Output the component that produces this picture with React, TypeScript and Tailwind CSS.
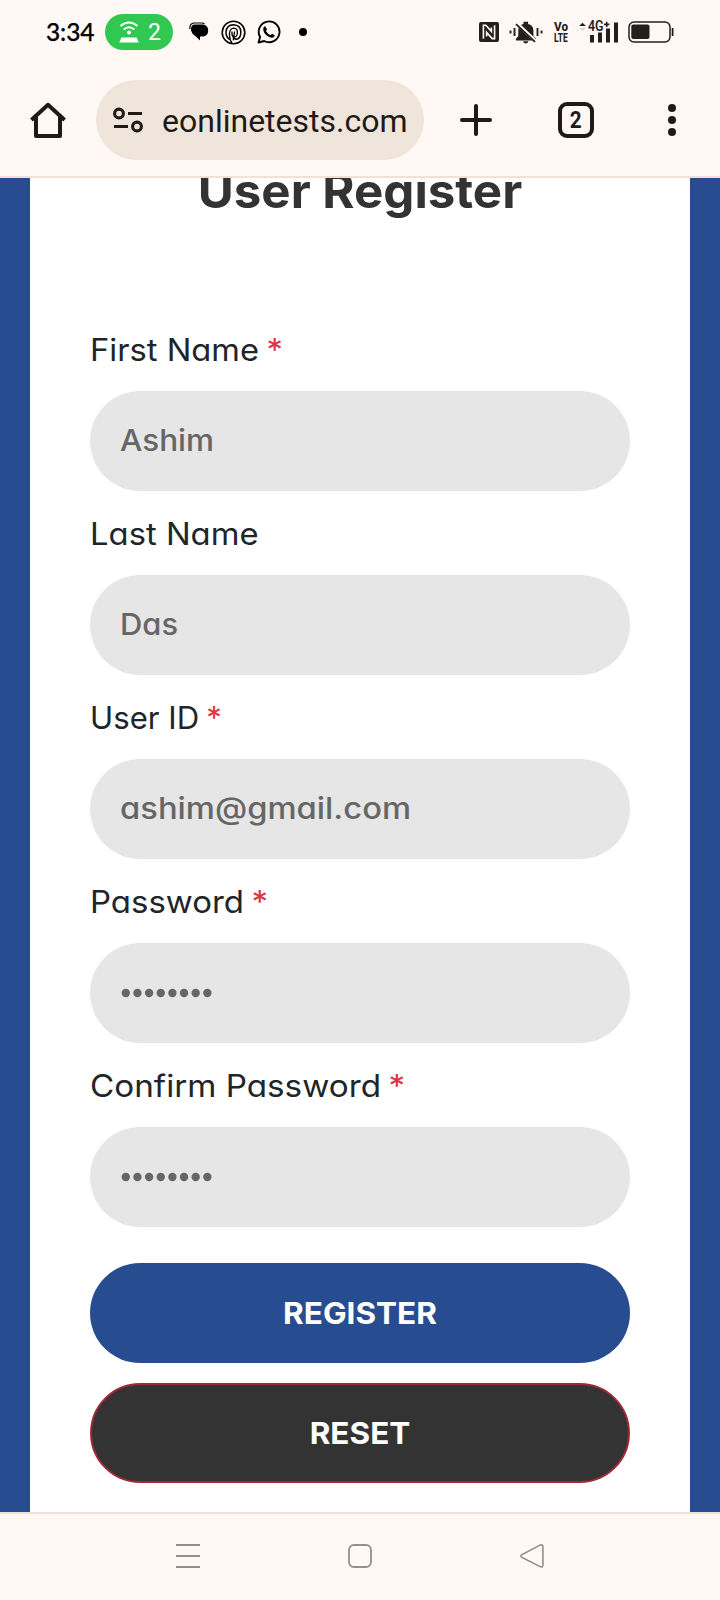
import type { ReactNode } from 'react';

const sans = "font-['Inter',sans-serif] [font-feature-settings:'cv11']";

function StatusBar() {
  return (
    <div className="flex h-16 w-full shrink-0 items-center text-[#231f1d]">
      <span className="ml-[46px] w-[59px] font-['Lato',sans-serif] text-[24.5px] leading-[64px] font-medium tracking-[-0.1px] text-black [-webkit-text-stroke:0.25px_black]">
        3:34
      </span>
      <div className="flex h-9 w-[68px] items-center rounded-full bg-[#30c850] pl-[14px] text-white">
        <svg width="20" height="22" viewBox="0 0 20 22" fill="none" stroke="currentColor">
          <path d="M1.5 5Q10-2 18.5 5" strokeWidth="2" />
          <path d="M4.7 8.6Q10 4 15.3 8.6" strokeWidth="2" />
          <circle cx="10" cy="11.6" r="2" fill="currentColor" stroke="none" />
          <path d="M2.4 16.5h15.2l2.2 5H.2z" fill="currentColor" stroke="none" />
        </svg>
        <span className="ml-[9px] pt-px font-['Roboto',sans-serif] text-[23px] leading-9">2</span>
      </div>
      <svg className="ml-4" width="20" height="20" viewBox="0 0 20 20" fill="#000">
        <path d="M.8 7Q.4 1.6 5 1h8.5l2 .9" fill="none" stroke="#000" strokeWidth="1.2" />
        <path d="M2.8 4Q3.6 2.6 6 2.6H14Q19.2 3.6 19.2 8.6 19.2 13.4 14.5 14.6H11V18.6L6.8 14.6Q3 12.4 2 8.5 1.6 5.6 2.8 4z" />
      </svg>
      <svg className="ml-3" width="25" height="25" viewBox="0 0 25 25" fill="none" stroke="#000" strokeWidth="1.5">
        <circle cx="12.5" cy="12.5" r="11.3" strokeWidth="1.6" />
        <path d="M9 19.6Q5 17.5 5 12 5.4 5 12.5 4.7 19.8 5.2 19.8 12 19.8 18.6 15.6 19.2 12.8 19 12.2 16.8" />
        <path d="M11 23Q9 21 8.6 16 7.9 8.4 12.6 8.2 16.8 8.4 16.4 13 15.8 17 13.4 17 11 16.8 11 14V11.5M13.6 11.5 12.2 20.4" strokeWidth="1.3" />
      </svg>
      <svg className="ml-[11px]" width="24" height="24" viewBox="0 0 24 24" fill="none" stroke="#000" strokeWidth="1.9">
        <path d="M1.5 22.5 3.1 17A10.4 10.4 0 1 1 7.2 21z" strokeLinejoin="round" />
        <path d="M8.4 6.4 10 9.4 8.9 11Q10.5 14 13.6 15.2L15 13.8 17.9 15.2Q17.3 17.7 15 17.8 10.5 17.5 7.2 12.8 5.3 8.8 7.2 6.6z" fill="#000" stroke="none" />
      </svg>
      <span className="ml-[18px] size-2 rounded-full bg-black" />

      <svg className="ml-auto" width="20" height="20" viewBox="0 0 20 20">
        <rect width="20" height="20" rx="2" fill="#231f1d" />
        <path d="M4.4 16.8V3.2h2.4L12.4 9.4V5.4M7.6 14.6V10.4l5.6 6.2h2.4V3.2" fill="none" stroke="#fff8f5" strokeWidth="1.6" />
      </svg>
      <svg className="ml-[10px]" width="34" height="24" viewBox="0 0 34 24" fill="none" stroke="currentColor">
        <path d="M1.5 10.5v3M5.5 8v8M28.5 8v8M32.5 10.5v3" strokeWidth="1.9" />
        <path d="M7 20.5v-2l2.3-2.2V9.8Q9.6 5 14.5 3.9V1.8h4.6v2.1Q24 5 24.4 9.8v6.5l2.6 2.2v2z" fill="currentColor" stroke="none" />
        <path d="M14 21.3h5.4Q18.8 23.5 16.7 23.5 14.7 23.5 14 21.3z" fill="currentColor" stroke="none" />
        <path d="M7.2 2.8 28 22.5" stroke="#fff8f5" strokeWidth="3.5" />
        <path d="M7 4.2 26 21.8" strokeWidth="1.8" />
      </svg>
      <div className="ml-[11px] flex h-[22px] w-4 flex-col justify-between font-['Roboto',sans-serif] text-[13px] leading-[11px] font-extrabold whitespace-nowrap">
        <span className="origin-left scale-x-[0.9]">Vo</span>
        <span className="origin-left scale-x-[0.65]">LTE</span>
      </div>
      <svg className="ml-[8px] font-['Roboto',sans-serif]" width="42" height="24" viewBox="0 0 42 24" fill="currentColor">
        <path d="M1.2 6 4.5 2.7 7.8 6z" />
        <path d="M1.2 8 4.5 11 7.8 8z" opacity=".15" />
        <path d="M12 15h4v7.5h-4zM20 12.5h4v10h-4zM28 8.5h4v14h-4zM36 2.5h4v20h-4z" />
        <text x="10" y="11.4" fontSize="14" fontWeight="600" textLength="15.5" lengthAdjust="spacingAndGlyphs">4G</text>
        <path d="M26 4.4h5.4M28.7 1.7v5.4" stroke="currentColor" strokeWidth="1.6" />
      </svg>
      <svg className="mr-[46px] ml-[8px]" width="46" height="22" viewBox="0 0 46 22" fill="none" stroke="currentColor">
        <rect x="1" y="1" width="41" height="20" rx="5" strokeWidth="1.5" />
        <rect x="3.3" y="3.6" width="18.2" height="14.4" rx="2" fill="currentColor" stroke="none" />
        <path d="M44.6 7v8" strokeWidth="1.8" />
      </svg>
    </div>
  );
}

function AddressBar() {
  return (
    <div className="flex h-28 w-full shrink-0 items-center text-[#201a17]">
      <svg className="ml-[30px]" width="36" height="36" viewBox="0 0 36 36" fill="none" stroke="currentColor" strokeWidth="4" strokeLinecap="round" strokeLinejoin="round">
        <path d="M1.4 18 18 2.8 34.6 18" strokeLinecap="butt" />
        <path d="M6 15v19h24V15" />
      </svg>
      <div className="ml-[30px] flex h-20 w-[328px] items-center rounded-full bg-[#f0e5db]">
        <svg className="ml-[16px]" width="32" height="28" viewBox="0 0 32 28" fill="none" stroke="currentColor" strokeWidth="3.1">
          <circle cx="7" cy="7.5" r="4.4" />
          <circle cx="25" cy="20.5" r="4.4" />
          <path d="M16 7.5h14M2 20.5h14" />
        </svg>
        <span className="ml-[18px] font-['Roboto',sans-serif] text-[32px] leading-[80px]">
          <span className="block pt-0.5">eonlinetests.com</span>
        </span>
      </div>
      <svg className="ml-9" width="32" height="32" viewBox="0 0 32 32" fill="none" stroke="currentColor" strokeWidth="4" strokeLinecap="round">
        <path d="M16 2v28M2 16h28" />
      </svg>
      <div className="ml-[66px] flex size-9 items-center justify-center rounded-[9px] border-4 border-current font-['Roboto',sans-serif] text-[23px] leading-[30px] font-bold">
        <span className="scale-x-90 pt-0.5">2</span>
      </div>
      <svg className="ml-[74px]" width="8" height="32" viewBox="0 0 8 32" fill="currentColor">
        <circle cx="4" cy="4" r="4" />
        <circle cx="4" cy="16" r="4" />
        <circle cx="4" cy="28" r="4" />
      </svg>
    </div>
  );
}

type FieldProps = { label: string; value: ReactNode; required?: boolean; labelClass: string; valueClass: string };

function Field({ label, value, required, labelClass, valueClass }: FieldProps) {
  return (
    <div className="flex flex-col">
      <div className={`flex h-[84px] origin-left text-[31px] leading-[85px] whitespace-nowrap text-[#212529] ${labelClass}`}>
        <span>{label}</span>
        {required && <span className="ml-[7px] text-[#dc3545]">*</span>}
      </div>
      <div className="flex h-[100px] items-center rounded-full bg-[#e6e6e6] pl-[30px] text-[30px] font-medium text-[#666]">
        <span className={`block origin-left ${valueClass}`}>{value}</span>
      </div>
    </div>
  );
}

function Dots() {
  return (
    <svg width="94" height="10" viewBox="0 0 94 10" fill="#666">
      {Array.from({ length: 8 }, (_, i) => (
        <circle key={i} cx={5.8 + i * 11.65} cy="5" r="4.2" />
      ))}
    </svg>
  );
}

export default function App() {
  return (
    <div className={`flex h-[1600px] w-[720px] flex-col overflow-hidden bg-[#fff8f5] ${sans}`}>
      <StatusBar />
      <AddressBar />
      <div className="h-0.5 shrink-0 bg-[#f0e0d5]" />
      <main className="h-[1334px] shrink-0 overflow-hidden bg-[#274d90] px-[30px]">
        <div className="h-full bg-white px-[60px]">
          <div className="h-[129px] overflow-hidden">
            <h1 className="-mt-[11px] scale-x-[1.025] text-center text-[48px] leading-[48px] font-bold whitespace-nowrap text-[#333]">User Register</h1>
          </div>
          <Field label="First Name" required value="Ashim" labelClass="scale-x-[1.055]" valueClass="scale-x-[1.05] pb-0.5" />
          <Field label="Last Name" value="Das" labelClass="scale-x-[1.058]" valueClass="scale-x-[1.03] pb-0.5" />
          <Field label="User ID" required value="ashim@gmail.com" labelClass="scale-x-[1.005]" valueClass="scale-x-[1.092] pb-0.5" />
          <Field label="Password" required value={<Dots />} labelClass="scale-x-[1.063]" valueClass="" />
          <Field label="Confirm Password" required value={<Dots />} labelClass="scale-x-[1.072]" valueClass="" />
          <button className="mt-9 block h-[100px] w-full rounded-full bg-[#274d90] text-[30px] font-bold text-white">
            <span className="block scale-x-[1.05]">REGISTER</span>
          </button>
          <button className="mt-5 block h-[100px] w-full rounded-full border-2 border-[#a02a36] bg-[#333] text-[30px] font-bold text-white">
            <span className="block scale-x-[1.05]">RESET</span>
          </button>
        </div>
      </main>
      <div className="h-0.5 shrink-0 bg-[#f0e0d5]" />
      <nav className="flex h-[84px] items-center text-[#978e8a]">
        <svg className="ml-[176px]" width="24" height="24" viewBox="0 0 24 24" stroke="currentColor" strokeWidth="2">
          <path d="M0 1h24M0 12h24M0 23h24" />
        </svg>
        <svg className="ml-[148px]" width="24" height="24" viewBox="0 0 24 24" fill="none" stroke="currentColor" strokeWidth="1.8">
          <rect x="1" y="1" width="22" height="22" rx="5" />
        </svg>
        <svg className="ml-[148px]" width="24" height="24" viewBox="0 0 24 24" fill="none" stroke="currentColor" strokeWidth="1.6" strokeLinejoin="round">
          <path d="M1.7 10.7 20 1.1Q22.7.2 22.9 2.5v19Q22.7 23.8 20 22.6L1.7 13.2Q0 12 1.7 10.7z" />
        </svg>
      </nav>
    </div>
  );
}
